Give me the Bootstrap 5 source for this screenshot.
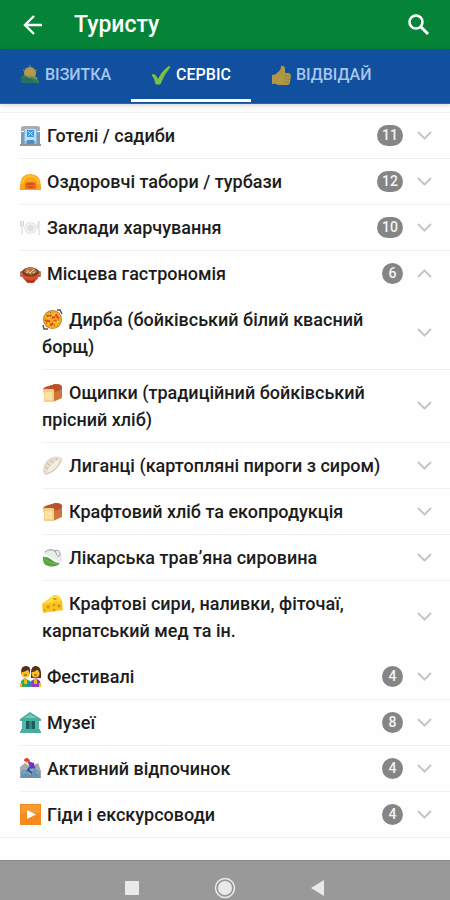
<!DOCTYPE html>
<html lang="uk">
<head>
<meta charset="utf-8">
<meta name="viewport" content="width=device-width, initial-scale=1">
<title>Туристу</title>
<link href="https://cdn.jsdelivr.net/npm/bootstrap@5.3.0/dist/css/bootstrap.min.css" rel="stylesheet">
<style>
body{font-family:Roboto,"Liberation Sans",sans-serif;background:#fefefe;color:#1c1c1c}
button{border:0;background:none;color:inherit}
.app-bar{background:#058437;height:49px;padding:0 19px}
.app-title{font-size:23px;line-height:32px;font-weight:500;margin:0 0 0 28px}
.tab-strip{background:#10509f;height:55px;padding-bottom:1px;border-bottom:1px solid #3c5f92;box-shadow:0 1px 5px #0003}
.tab-strip .tab-btn{font-size:16px;font-weight:500;color:#a9c6ec;padding:2px 20px 0;gap:5px;border-bottom:3px solid transparent;white-space:nowrap}
.tab-strip .tab-btn.active{color:#fff;border-bottom-color:#fff}
.tab-btn svg{width:20px;height:20px}
.tab-btn:not(.active) svg{opacity:.72}
.sections{margin-top:8px;border-top:1px solid #eff2f6;border-bottom:1px solid #efefef}
.item{margin-left:20px}
.sub-items .item{margin-left:22px}
.item-btn{padding:9px 18px 9px 0;font-size:18px;line-height:27px;font-weight:500;border-bottom:1px solid #f1f1f1}
.no-line,.sub-items .item:last-child .item-btn{border-color:transparent}
.sections>.item:last-child>.item-btn{border-bottom:0}
.emo{width:21px;height:21px;margin:-3px 6px 0 0}
.count{background:#858585;color:#f4f4f4;font-size:14px;line-height:21px;border-radius:11px;min-width:21px;padding:0 5px;margin-right:13px;text-align:center;font-weight:500}
.chev{width:16px;height:16px;fill:none;stroke:#c6c6c6;stroke-width:2}
.label-text{padding-right:26px}
.sys-bar{background:#999;height:40px;border-top:1px solid #878787;padding-top:14px;gap:69px}
.sys-bar svg{width:24px;height:24px;fill:#e9e9e9;display:block}
</style>
<script src="https://cdn.jsdelivr.net/npm/bootstrap@5.3.0/dist/js/bootstrap.bundle.min.js"></script>
</head>
<body class="d-flex flex-column min-vh-100">
<svg class="d-none" aria-hidden="true">
<symbol id="down" viewBox="0 0 16 16"><path d="M2 4l6.500 6.500L15 4"/></symbol>
<symbol id="up" viewBox="0 0 16 16"><path d="M2 11l6.500-6.500L15 11"/></symbol>
<symbol id="park" viewBox="0 0 20 20"><circle cx="10" cy="8" r="6" fill="#f5b72c"/><path d="M3 5l2 1M10 0v2M17 5l-2 1M5 3l2 2" stroke="#c6a849"/><path d="M1 18v-6q3-3 8 0 6-2 10 4v2z" fill="#4f9038"/><path d="M1 12q9-1 16 6H1z" fill="#2f7d46"/><path d="M8 12q5-2 9 2" stroke="#b5b43d" stroke-width="2" fill="none"/></symbol>
<symbol id="check" viewBox="0 0 20 20"><path d="M1 10q3-2 6 5Q11 6 17 2q2-1 2 0Q13 9 9 19H5Q4 13 1 10z" fill="#7cc142" stroke="#7cc142"/></symbol>
<symbol id="thumb" viewBox="0 0 20 20"><path d="M1 10q4 0 6-3 3-2 3-6 3-1 4 2v5h3q3 0 3 3l-1 6q0 3-3 3H7q-3-2-6-1z" fill="#edb321"/><path d="M13 11h6M13 14h6M13 17h5" stroke="#cb9620"/></symbol>
<symbol id="hotel" viewBox="0 0 21 21"><path d="M1 7h19v12H1z" fill="#7a9dba"/><path d="M4 1h13v18H4z" fill="#8db8da"/><path d="M1 3q0-2 3-2h13q3 0 3 2v3h-3V4H4v2H1z" fill="#a3adb3"/><path d="M5 4h11v12H5z" fill="#b9def7"/><path d="M7 5h7v7H7z" fill="#3e9ae3"/><path d="M8.500 6.500l4 4m0-4l-4 4" stroke="#d9f0ff"/><path d="M7 15h7v4H7z" fill="#568cba"/><path d="M0 19h21v2H0z" fill="#8f9698"/></symbol>
<symbol id="tent" viewBox="0 0 21 21"><path d="M0 19v-5Q1 3 10 3q10 0 11 11v5z" fill="#fca51a"/><path d="M2 13Q4 5 10 5q7 0 9 8" fill="none" stroke="#ffc02d" stroke-width="2"/><path d="M5 18v-5q0-2 3-2h5q3 0 3 2v5z" fill="#ea6b1c"/><path d="M7 13h7M8 16h5" stroke="#b64a1c"/></symbol>
<symbol id="plate" viewBox="0 0 21 21"><circle cx="10.500" cy="11" r="6.500" fill="#ebebeb"/><circle cx="10.500" cy="11" r="4" fill="#e0e0e0" stroke="#f7f7f7"/><path d="M2 4v14M.5 4v5h3V4M19 18V4q-2 3-1 7h1" fill="none" stroke="#d6d6d6"/></symbol>
<symbol id="pot" viewBox="0 0 21 21"><path d="M3 9H1v4h3m13-4h3v4h-3" fill="none" stroke="#a64d35" stroke-width="1.500"/><path d="M2 10h17q0 6-4 8l-1 2H7l-1-2q-4-2-4-8z" fill="#d94c2c"/><ellipse cx="10.500" cy="9" rx="8.500" ry="4.500" fill="#74402b"/><path d="M4 9q2-5 6-5 5 0 7 5l-6 3z" fill="#bd7646"/><path d="M7 7l3 3 4-4M6 10l2-1m5 1l2-1" stroke="#eed28b" fill="none"/><path d="M6 17q5 3 9 0" stroke="#ad2f23" stroke-width="2" fill="none"/></symbol>
<symbol id="paella" viewBox="0 0 21 21"><path d="M15 1h3l2 4M1 16l1 4h4" fill="none" stroke="#555" stroke-width="1.500"/><circle cx="10.500" cy="10.500" r="9.500" fill="#b77a2d"/><circle cx="10.500" cy="10.500" r="8.700" fill="#f3a922"/><path d="M5 6q2 3 4 0m-1 10q4-1 6-5M3 11q2 2 5 1M14 5q0 3 3 4M10 9l3-1" fill="none" stroke="#df4a22" stroke-width="2"/><path d="M6 9l2-1m3 6l3-1M11 6l2-1m2 8l2-1M6 14l1 1" stroke="#fbd940" stroke-width="1.500"/><path d="M8 3l1 1m7 7h1M4 14l1 1m7 2l1-1" stroke="#567f2c"/></symbol>
<symbol id="bread" viewBox="0 0 21 21"><path d="M1 8q0-3 5-4l8-2q7 0 6 4v10l-9 4H2V11z" fill="#cd7638"/><path d="M2 6l11-4q7 0 7 4-1 3-9 4z" fill="#b9522c"/><path d="M1 10q-1-3 3-3h6q3 0 2 3v10H2V11z" fill="#f5cf88"/><path d="M3 10h7v8H3z" fill="#fae1a8"/></symbol>
<symbol id="dumpling" viewBox="0 0 21 21"><path d="M1 17Q1 7 8 3q7-3 12 0 1 3-3 8-6 8-14 9z" fill="#e5dbcd"/><path d="M4 19Q7 9 19 3q-1 9-15 16z" fill="#f5ede2"/><path d="M3 12l3 2M5 8l3 3M9 5l2 3M14 3l1 2" stroke="#cdbda8"/><path d="M4 19q10-2 15-14" fill="none" stroke="#d7c6b0"/></symbol>
<symbol id="leaf" viewBox="0 0 21 21"><path d="M1 7q6-8 14-3 6 4 5 11-6-1-10-4-4-3-9-4z" fill="#e8ebe9"/><path d="M3 5q5-4 10-1l2 4m-3-4q5-2 6 2t-3 3" fill="none" stroke="#98a19c"/><path d="M1 10q-1 7 5 9 8 2 12-3-5 0-8-3-5-4-9-3z" fill="#55a441"/><path d="M2 12q6 5 13 5" fill="none" stroke="#78b951"/></symbol>
<symbol id="cheese" viewBox="0 0 21 21"><path d="M0 11L12 2q6 0 8 6l1 9-20 3z" fill="#fbc31c"/><path d="M0 11L12 2q6 0 8 6z" fill="#ffda3a"/><g fill="#d9921a"><circle cx="6" cy="14" r="1.700"/><circle cx="12" cy="12" r="1.300"/><circle cx="17" cy="13" r="1.700"/><circle cx="12" cy="17" r="1.300"/><ellipse cx="13" cy="6" rx="2" ry="1"/><circle cx="2.500" cy="17" r="1"/></g></symbol>
<symbol id="people" viewBox="0 0 21 21"><path d="M1 21v-6l4-3 5 3v6z" fill="#37a955"/><path d="M11 21v-6l5-3 4 3 1 6z" fill="#8b43b5"/><path d="M4 13h3v5H4zm10 0h3v5h-3z" fill="#f4b41f"/><path d="M1 6q0-6 5-6t4 6l-1 3H2zM11 12V5q1-5 5-5t5 6v6z" fill="#543023"/><circle cx="5.500" cy="7.500" r="4" fill="#fbbd22"/><circle cx="15.500" cy="7.500" r="4" fill="#fbbd22"/><path d="M2 6q4 0 6-3l2 4V3L6 0 2 2zm10 0q4 0 5-3l3 4V3l-4-3-4 2z" fill="#543023"/><path d="M7 20l2-5 3 1v5z" fill="#2685c5"/><path d="M4 9h3m7 0h3" stroke="#8a421b"/><path d="M1 17v4m19-4v4" stroke="#f6b71f" stroke-width="2"/></symbol>
<symbol id="museum" viewBox="0 0 21 21"><path d="M0 7l10-7 11 7v2H0z" fill="#4cab9b"/><path d="M2 9h17v9H2z" fill="#55b8a7"/><path d="M6 9h3v8H6zm6 0h3v8h-3z" fill="#17605f"/><path d="M9 9h3v8H9z" fill="#31877f"/><path d="M1 17h19v2h1v2H0v-2h1z" fill="#4cae9e"/><path d="M4 6l6-4 7 4z" fill="#70cbb9"/></symbol>
<symbol id="biker" viewBox="0 0 21 21"><path d="M0 20V9l5-4 6 4 7-4 3 8v7z" fill="#a5a9ab"/><path d="M0 20l4-5 5 2 6-3 6 6z" fill="#7d8891"/><g fill="none" stroke="#559bc9" stroke-width="1.500"><circle cx="5" cy="16" r="3.200"/><circle cx="16" cy="16" r="3.200"/><path d="M5 16l4-5 3 5 3-6 1 6"/></g><path d="M7 3l7 2 1 5-4 1z" fill="#6936bd"/><path d="M10 9l-2 3 4 3" stroke="#384b96" stroke-width="2" fill="none"/><circle cx="7" cy="3" r="2" fill="#f0ad29"/><path d="M4 3q0-3 3-3 3 1 3 4z" fill="#df3938"/></symbol>
<symbol id="play" viewBox="0 0 21 21"><path d="M0 0h21v21H0z" fill="#f58a1d"/><path d="M1 1h19v8H1z" fill="#f99a31"/><path d="M7 6l9 4.500L7 15z" fill="#fff"/></symbol>
</svg>

<header class="app-bar d-flex align-items-center text-white">
<button class="p-0 d-flex" aria-label="Назад"><svg width="27" height="28" viewBox="0 0 27 28" fill="none" stroke="#fff" stroke-width="2.400"><path d="M23 14H6m9-9l-9 9 9 9"/></svg></button>
<h1 class="app-title">Туристу</h1>
<button class="p-0 d-flex ms-auto" aria-label="Пошук"><svg width="26" height="26" viewBox="0 0 26 26" fill="none" stroke="#fff" stroke-width="2.600"><circle cx="11" cy="10" r="6.500"/><path d="M15.500 14.500l7.500 7.500" stroke-width="3"/></svg></button>
</header>
<nav class="tab-strip d-flex" aria-label="Розділи">
<button class="tab-btn d-flex align-items-center"><svg><use href="#park"/></svg>ВІЗИТКА</button>
<button class="tab-btn active d-flex align-items-center"><svg><use href="#check"/></svg>СЕРВІС</button>
<button class="tab-btn d-flex align-items-center"><svg><use href="#thumb"/></svg>ВІДВІДАЙ</button>
</nav>
<main class="flex-grow-1">
<ul class="sections list-unstyled mb-0">
<li class="item"><button class="item-btn d-flex align-items-center w-100 text-start"><span class="flex-grow-1"><svg class="emo"><use href="#hotel"/></svg>Готелі / садиби</span><span class="count">11</span><svg class="chev flex-shrink-0"><use href="#down"/></svg></button></li>
<li class="item"><button class="item-btn d-flex align-items-center w-100 text-start"><span class="flex-grow-1"><svg class="emo"><use href="#tent"/></svg>Оздоровчі табори / турбази</span><span class="count">12</span><svg class="chev flex-shrink-0"><use href="#down"/></svg></button></li>
<li class="item"><button class="item-btn d-flex align-items-center w-100 text-start"><span class="flex-grow-1"><svg class="emo"><use href="#plate"/></svg>Заклади харчування</span><span class="count">10</span><svg class="chev flex-shrink-0"><use href="#down"/></svg></button></li>
<li class="item"><button class="item-btn no-line d-flex align-items-center w-100 text-start" aria-expanded="true"><span class="flex-grow-1"><svg class="emo"><use href="#pot"/></svg>Місцева гастрономія</span><span class="count">6</span><svg class="chev flex-shrink-0"><use href="#up"/></svg></button>
<ul class="sub-items list-unstyled">
<li class="item"><button class="item-btn d-flex align-items-center w-100 text-start"><span class="label-text flex-grow-1"><svg class="emo"><use href="#paella"/></svg>Дирба (бойківський білий квасний борщ)</span><svg class="chev flex-shrink-0"><use href="#down"/></svg></button></li>
<li class="item"><button class="item-btn d-flex align-items-center w-100 text-start"><span class="label-text flex-grow-1"><svg class="emo"><use href="#bread"/></svg>Ощипки (традиційний бойківський прісний хліб)</span><svg class="chev flex-shrink-0"><use href="#down"/></svg></button></li>
<li class="item"><button class="item-btn d-flex align-items-center w-100 text-start"><span class="label-text flex-grow-1"><svg class="emo"><use href="#dumpling"/></svg>Лиганці (картопляні пироги з сиром)</span><svg class="chev flex-shrink-0"><use href="#down"/></svg></button></li>
<li class="item"><button class="item-btn d-flex align-items-center w-100 text-start"><span class="label-text flex-grow-1"><svg class="emo"><use href="#bread"/></svg>Крафтовий хліб та екопродукція</span><svg class="chev flex-shrink-0"><use href="#down"/></svg></button></li>
<li class="item"><button class="item-btn d-flex align-items-center w-100 text-start"><span class="label-text flex-grow-1"><svg class="emo"><use href="#leaf"/></svg>Лікарська трав’яна сировина</span><svg class="chev flex-shrink-0"><use href="#down"/></svg></button></li>
<li class="item"><button class="item-btn d-flex align-items-center w-100 text-start"><span class="label-text flex-grow-1"><svg class="emo"><use href="#cheese"/></svg>Крафтові сири, наливки, фіточаї, карпатський мед та ін.</span><svg class="chev flex-shrink-0"><use href="#down"/></svg></button></li>
</ul></li>
<li class="item"><button class="item-btn d-flex align-items-center w-100 text-start"><span class="flex-grow-1"><svg class="emo"><use href="#people"/></svg>Фестивалі</span><span class="count">4</span><svg class="chev flex-shrink-0"><use href="#down"/></svg></button></li>
<li class="item"><button class="item-btn d-flex align-items-center w-100 text-start"><span class="flex-grow-1"><svg class="emo"><use href="#museum"/></svg>Музеї</span><span class="count">8</span><svg class="chev flex-shrink-0"><use href="#down"/></svg></button></li>
<li class="item"><button class="item-btn d-flex align-items-center w-100 text-start"><span class="flex-grow-1"><svg class="emo"><use href="#biker"/></svg>Активний відпочинок</span><span class="count">4</span><svg class="chev flex-shrink-0"><use href="#down"/></svg></button></li>
<li class="item"><button class="item-btn d-flex align-items-center w-100 text-start"><span class="flex-grow-1"><svg class="emo"><use href="#play"/></svg>Гіди і екскурсоводи</span><span class="count">4</span><svg class="chev flex-shrink-0"><use href="#down"/></svg></button></li>
</ul>
</main>
<footer class="sys-bar d-flex justify-content-center">
<button class="p-0" aria-label="Останні програми"><svg viewBox="0 0 24 24"><path d="M5 5h14v14H5z"/></svg></button>
<button class="p-0" aria-label="Головний екран"><svg viewBox="0 0 24 24"><circle cx="12" cy="12" r="7"/><circle cx="12" cy="12" r="9.500" fill="none" stroke="#e9e9e9" stroke-width="1.500"/></svg></button>
<button class="p-0" aria-label="Назад до попереднього"><svg viewBox="0 0 24 24"><path d="M18 4v16L5 12z"/></svg></button>
</footer>
</body>
</html>
